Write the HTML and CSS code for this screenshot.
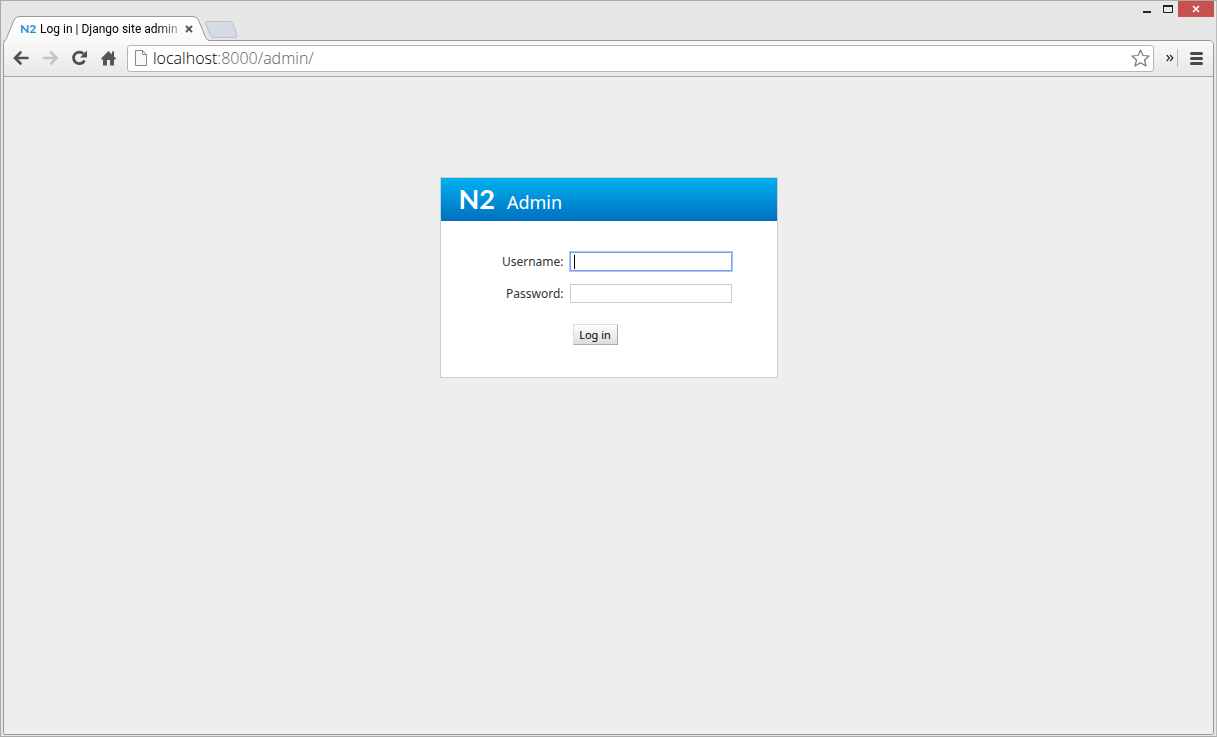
FILE: index.html
```html
<!DOCTYPE html>
<html lang="en">
<head>
<meta charset="utf-8">
<title>Log in | Django site admin</title>
<link rel="stylesheet" href="styles.css">
</head>
<body>
<div class="window">
  <header class="tabstrip">
    <div class="tab">
      <svg class="tab-shape" width="206" height="26" viewBox="0 0 206 26" aria-hidden="true">
        <defs><linearGradient id="tabfill" x1="0" y1="0" x2="0" y2="1"><stop offset="0" stop-color="#ffffff"/><stop offset="1" stop-color="#f9f9f9"/></linearGradient></defs>
        <path d="M0 26C3 25 3 23 4 21L11 4Q12.500 .5 16 .5H190Q194 .5 195.500 4L202 20Q204 24.500 206 24.500V26Z" fill="url(#tabfill)"/>
        <path d="M0 25.500C3 25 3 23 4 21L11 4Q12.500 .5 16 .5H190Q194 .5 195.500 4L202 20Q204 24.500 206 24.500" fill="none" stroke="#999"/>
      </svg>
      <span class="favicon">N2</span>
      <span class="tab-title">Log in | Django site admin</span>
      <button class="tab-close" aria-label="Close tab"><svg width="8" height="8" viewBox="0 0 8 8"><path d="M1 1L7 7M7 1L1 7" stroke="#555" stroke-width="1.800"/></svg></button>
    </div>
    <button class="new-tab" aria-label="New tab"><svg width="33" height="17" viewBox="0 0 33 17"><path d="M3 .5H24Q27 .5 28 3L32 14Q32.500 16.500 30 16.500H9Q6 16.500 5 14L.8 3Q0 .5 3 .5Z" fill="#d4dbe2" stroke="#bbbfc3"/></svg></button>
    <div class="window-controls">
      <button aria-label="Minimize"><svg width="8" height="9" viewBox="0 0 8 9"><path d="M0 6H8V8H0Z" fill="#222"/></svg></button>
      <button aria-label="Maximize"><svg width="10" height="8" viewBox="0 0 10 8"><path d="M.5 1V7.500H9.500V1" fill="none" stroke="#222"/><path d="M0 1H10" stroke="#222" stroke-width="2"/></svg></button>
      <button class="window-close" aria-label="Close"><svg width="8" height="8" viewBox="0 0 8 8"><path d="M1 1L7 7M7 1L1 7" stroke="#fff" stroke-width="1.600"/></svg></button>
    </div>
  </header>
  <div class="frame">
    <nav class="toolbar">
      <button class="tool" aria-label="Back"><svg width="17" height="16" viewBox="0 0 17 16"><path d="M7.500 2.500L2 8L7.500 13.500M3 8H14.500" fill="none" stroke="#505050" stroke-width="2.600" stroke-linecap="round"/></svg></button>
      <button class="tool" aria-label="Forward"><svg width="17" height="16" viewBox="0 0 17 16"><path d="M9 2.500L14.500 8L9 13.500M13.500 8H2" fill="none" stroke="#c4c4c4" stroke-width="2.600" stroke-linecap="round"/></svg></button>
      <button class="tool" aria-label="Reload"><svg width="17" height="16" viewBox="0 0 17 16"><path d="M13.500 10.500A5.800 5.800 0 1 1 12.500 3.800" fill="none" stroke="#505050" stroke-width="2.800"/><path d="M16 .5V7.500H9Z" fill="#505050"/></svg></button>
      <button class="tool" aria-label="Home"><svg width="17" height="16" viewBox="0 0 17 16"><path d="M8.500 1L1 8.500L2.500 10L3 9.500V15.500H7V10H10V15.500H14V9.500L14.500 10L16 8.500L14 6.500V1.500H12V4.500Z" fill="#555"/></svg></button>
      <div class="omnibox">
        <svg width="12" height="16" viewBox="0 0 12 16" aria-hidden="true"><path d="M.5 .5H7.500L11.500 4.500V15.500H.5ZM7.500 .5V4.500H11.500" fill="#f8f8f8" stroke="#888"/></svg>
        <a class="url" href="#"><span class="host">localhost</span>:8000/admin/</a>
        <button class="star" aria-label="Bookmark this page"><svg width="19" height="18" viewBox="0 0 19 18"><path d="M9.500 1L12 6.500L18 7L13.500 11L15 17L9.500 13.700L4 17L5.500 11L1 7L7 6.500Z" fill="#fff" stroke="#777" stroke-width="1.200" stroke-linejoin="round"/></svg></button>
      </div>
      <button class="more" aria-label="More extensions"><svg width="8" height="8" viewBox="0 0 8 8"><path d="M.7 1L3.300 4L.7 7M4.200 1L6.800 4L4.200 7" fill="none" stroke="#333" stroke-width="1.300"/></svg></button>
      <span class="divider"></span>
      <button class="menu" aria-label="Menu"><svg width="13" height="13" viewBox="0 0 13 13"><path d="M1.500 1.500H11.500M1.500 6.500H11.500M1.500 11.500H11.500" stroke="#484848" stroke-width="3" stroke-linecap="round"/></svg></button>
    </nav>
    <main class="page">
      <section class="login">
        <h1 class="login-header"><span class="brand">N2</span><span class="site">Admin</span></h1>
        <form class="login-form">
          <div class="row"><label for="username">Username:</label><div class="field active"><input id="username" type="text"><span class="caret"></span></div></div>
          <div class="row"><label for="password">Password:</label><div class="field"><input id="password" type="password"></div></div>
          <button class="submit" type="button">Log in</button>
        </form>
      </section>
    </main>
  </div>
</div>
</body>
</html>
```
FILE: styles.css
```css
* { box-sizing: border-box; }
body { margin: 0; background: #e6e6e6; font-family: "Noto Sans", "Open Sans", sans-serif; }
button { padding: 0; border: 0; background: none; font: inherit; }
svg { display: block; }

.window { display: flex; flex-direction: column; min-height: 100vh; padding: 0 2px 1px; border: 1px solid #aaa; border-right-color: #bbb; }
.tabstrip { display: flex; align-items: flex-end; height: 39px; position: relative; z-index: 1; }
.tab { position: relative; display: flex; align-items: center; width: 206px; height: 26px; padding: 0 14px 0 17px; gap: 4px; margin-bottom: -2px; }
.tab-shape { position: absolute; inset: 0; }
.favicon { position: relative; width: 16px; font: bold 12px/16px Lato, sans-serif; color: #1593d2; }
.tab-title { position: relative; width: 139px; white-space: nowrap; font: 12px/16px Roboto, sans-serif; color: #000; -webkit-mask-image: linear-gradient(90deg, #000 84%, rgba(0, 0, 0, .3)); mask-image: linear-gradient(90deg, #000 84%, rgba(0, 0, 0, .3)); }
.tab-close { position: relative; margin-left: 2px; }
.new-tab { margin: 0 0 2px -4px; }
.window-controls { display: flex; align-self: flex-start; margin-left: auto; }
.window-controls button { display: grid; place-items: center; width: 21px; height: 16px; }
.window-controls .window-close { width: 36px; background: #c75050; }

.frame { flex: 1; display: flex; flex-direction: column; border: 1px solid #999; border-radius: 5px 5px 2px 2px; overflow: hidden; }
.toolbar { display: flex; align-items: center; height: 36px; padding: 0 10px 1px 9px; background: linear-gradient(#f9f9f9, #e7e7e7); border-bottom: 1px solid #aaa; }
.tool { width: 17px; margin-right: 12px; }
.omnibox { flex: 1; display: flex; align-items: center; height: 27px; margin-left: -2px; padding: 0 3px 0 7px; border: 1px solid #b5b5b5; border-radius: 3px; background: #fff; }
.url { flex: 1; margin-left: 6px; font: 300 16px/20px "Open Sans", sans-serif; color: #606060; text-decoration: none; }
.host { color: #000; }
.more { margin-left: 12px; }
.divider { width: 1px; height: 18px; margin: 0 12px 0 3px; background: #bbb; }

.page { flex: 1; padding: 100px 20px; background: #eee; }
.login { width: 338px; margin: 0 auto; border: 1px solid #ccc; background: #fff; }
.login-header { display: flex; align-items: baseline; gap: 12px; height: 43px; margin: 0; padding: 3px 18px 0; background: linear-gradient(#00b0f0, #0070c0); color: #fff; font-weight: normal; }
.brand { font: bold 27px/36px Lato, sans-serif; }
.site { font: 18px/24px "Noto Sans", sans-serif; }
.login-form { padding: 31px 45px 32px 54px; }
.row { display: flex; align-items: center; margin-bottom: 12px; }
.row label { width: 69px; text-align: right; font-size: 12px; line-height: 16px; color: #333; }
.field { position: relative; flex: 1; height: 20px; margin-left: 6px; }
.field input { display: block; width: 100%; height: 19px; padding: 2px 3px; border: 1px solid #ccc; outline: 0; background: #fff; }
.active input { border-color: #7ba3e6; box-shadow: 0 0 0 1px #a9c6f5; }
.caret { position: absolute; left: 4px; top: 3px; width: 1px; height: 14px; background: #000; }
.submit { display: block; width: 45px; height: 21px; margin: 20px 0 0 78px; border: 1px solid; border-color: #ddd #aaa #aaa #ddd; background: linear-gradient(#fff, #ddd); font-size: 11px; line-height: 16px; color: #000; }
```
